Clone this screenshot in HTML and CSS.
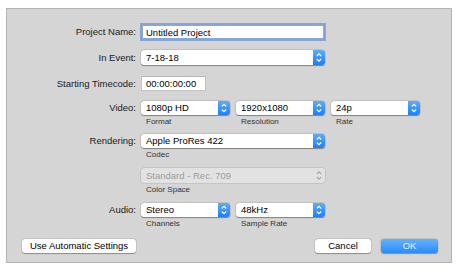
FILE: index.html
```html
<!DOCTYPE html>
<html lang="en">
<head>
    <meta charset="UTF-8">
    <title>New Project</title>
    <link rel="stylesheet" href="styles.css">
</head>
<body>
    <div class="dialog">
        <div class="row r-name">
            <label class="label">Project Name:</label>
            <input class="text-input focused" type="text" value="Untitled Project">
        </div>

        <div class="row r-event">
            <label class="label">In Event:</label>
            <div class="popup w-full">
                <span class="value">7-18-18</span>
                <span class="stepper">
                    <svg width="12" height="15" viewBox="0 0 12 15"><path d="M3.8 6 L6 3.8 L8.2 6 M3.8 9 L6 11.2 L8.2 9" fill="none" stroke="#fff" stroke-width="1.1"/></svg>
                </span>
            </div>
        </div>

        <div class="row r-time">
            <label class="label">Starting Timecode:</label>
            <div class="timecode">00:00:00:00</div>
        </div>

        <div class="row r-video">
            <label class="label">Video:</label>
            <div class="fields">
                <div class="field">
                    <div class="popup w-small">
                        <span class="value">1080p HD</span>
                        <span class="stepper">
                            <svg width="12" height="14" viewBox="0 0 12 14"><path d="M3.8 5.5 L6 3.3 L8.2 5.5 M3.8 8.5 L6 10.7 L8.2 8.5" fill="none" stroke="#fff" stroke-width="1.1"/></svg>
                        </span>
                    </div>
                    <div class="sub">Format</div>
                </div>
                <div class="field">
                    <div class="popup w-small">
                        <span class="value">1920x1080</span>
                        <span class="stepper">
                            <svg width="12" height="14" viewBox="0 0 12 14"><path d="M3.8 5.5 L6 3.3 L8.2 5.5 M3.8 8.5 L6 10.7 L8.2 8.5" fill="none" stroke="#fff" stroke-width="1.1"/></svg>
                        </span>
                    </div>
                    <div class="sub">Resolution</div>
                </div>
                <div class="field">
                    <div class="popup w-small">
                        <span class="value">24p</span>
                        <span class="stepper">
                            <svg width="12" height="14" viewBox="0 0 12 14"><path d="M3.8 5.5 L6 3.3 L8.2 5.5 M3.8 8.5 L6 10.7 L8.2 8.5" fill="none" stroke="#fff" stroke-width="1.1"/></svg>
                        </span>
                    </div>
                    <div class="sub">Rate</div>
                </div>
            </div>
        </div>

        <div class="row r-render">
            <label class="label">Rendering:</label>
            <div class="field">
                <div class="popup w-full">
                    <span class="value">Apple ProRes 422</span>
                    <span class="stepper">
                        <svg width="12" height="14" viewBox="0 0 12 14"><path d="M3.8 5.5 L6 3.3 L8.2 5.5 M3.8 8.5 L6 10.7 L8.2 8.5" fill="none" stroke="#fff" stroke-width="1.1"/></svg>
                    </span>
                </div>
                <div class="sub">Codec</div>
            </div>
        </div>

        <div class="row r-color">
            <label class="label"></label>
            <div class="field">
                <div class="popup w-full disabled">
                    <span class="value">Standard - Rec. 709</span>
                    <span class="stepper">
                        <svg width="12" height="15" viewBox="0 0 12 15"><path d="M3.8 6 L6 3.8 L8.2 6 M3.8 9 L6 11.2 L8.2 9" fill="none" stroke="#a8a8a8" stroke-width="1.1"/></svg>
                    </span>
                </div>
                <div class="sub">Color Space</div>
            </div>
        </div>

        <div class="row r-audio">
            <label class="label">Audio:</label>
            <div class="fields">
                <div class="field">
                    <div class="popup w-small">
                        <span class="value">Stereo</span>
                        <span class="stepper">
                            <svg width="12" height="14" viewBox="0 0 12 14"><path d="M3.8 5.5 L6 3.3 L8.2 5.5 M3.8 8.5 L6 10.7 L8.2 8.5" fill="none" stroke="#fff" stroke-width="1.1"/></svg>
                        </span>
                    </div>
                    <div class="sub">Channels</div>
                </div>
                <div class="field">
                    <div class="popup w-small">
                        <span class="value">48kHz</span>
                        <span class="stepper">
                            <svg width="12" height="14" viewBox="0 0 12 14"><path d="M3.8 5.5 L6 3.3 L8.2 5.5 M3.8 8.5 L6 10.7 L8.2 8.5" fill="none" stroke="#fff" stroke-width="1.1"/></svg>
                        </span>
                    </div>
                    <div class="sub">Sample Rate</div>
                </div>
            </div>
        </div>

        <div class="buttons">
            <button class="btn auto">Use Automatic Settings</button>
            <div class="right">
                <button class="btn cancel">Cancel</button>
                <button class="btn ok">OK</button>
            </div>
        </div>
    </div>
</body>
</html>
```

FILE: styles.css
```css
body {
    margin: 0;
    background-color: #fff;
    font-family: "Liberation Sans", Arial, sans-serif;
    font-size: 9.5px;
    color: #111;
}

.dialog {
    margin: 8px 0 0 6px;
    width: 446px;
    height: 255px;
    box-sizing: border-box;
    background-color: #d5d5d5;
    border: 1px solid #b4b4b4;
    padding-top: 16px;
}

.row {
    display: flex;
    align-items: flex-start;
}

.label {
    width: 129px;
    margin-right: 5px;
    text-align: right;
    line-height: 14px;
    color: #1a1a1a;
}

.r-event { margin-top: 11px; }
.r-time { margin-top: 11px; }
.r-video { margin-top: 10px; }
.r-render { margin-top: 7px; }
.r-color { margin-top: 8px; }
.r-audio { margin-top: 8px; }

.r-event .label,
.r-time .label,
.r-color .label {
    line-height: 15px;
}

.text-input {
    width: 182px;
    height: 14px;
    margin: 0;
    padding: 0 3px;
    box-sizing: border-box;
    border: 1px solid #8aa7d6;
    background-color: #fff;
    font-family: inherit;
    font-size: 9.5px;
    color: #000;
    outline: none;
}

.text-input.focused {
    box-shadow: 0 0 0 2px #85a5d8;
    margin-left: 1px;
}

.timecode {
    width: 65px;
    height: 15px;
    box-sizing: border-box;
    padding-left: 4px;
    line-height: 14px;
    background-color: #fff;
    border: 1px solid #c4c4c4;
    border-top-color: #b8b8b8;
    color: #000;
}

.fields {
    display: flex;
    gap: 6px;
}

.popup {
    display: flex;
    height: 14px;
    background-color: #fff;
    border-radius: 3px;
    box-shadow: 0 0.5px 1px rgba(0, 0, 0, 0.35), 0 0 0 0.5px rgba(0, 0, 0, 0.12);
    overflow: hidden;
}

.r-event .popup,
.r-color .popup {
    height: 15px;
}

.popup .value {
    flex: 1;
    padding-left: 5px;
    line-height: 14px;
    color: #000;
    white-space: nowrap;
}

.r-event .popup .value,
.r-color .popup .value {
    line-height: 15px;
}

.popup .stepper {
    width: 12px;
    background: linear-gradient(#5eabfb, #1d80f6);
    display: flex;
}

.popup.disabled {
    background-color: #e2e2e2;
    box-shadow: 0 0 0 0.5px rgba(0, 0, 0, 0.15);
}

.popup.disabled .value {
    color: #9d9d9d;
}

.popup.disabled .stepper {
    background: none;
}

.w-full { width: 184px; }
.w-small { width: 89px; }

.sub {
    margin-top: 2px;
    padding-left: 5px;
    font-size: 8px;
    line-height: 10px;
    color: #333;
}

.buttons {
    display: flex;
    justify-content: space-between;
    margin: 10px 13px 0 15px;
}

.right {
    display: flex;
    gap: 10px;
}

.btn {
    height: 14px;
    padding: 0;
    border: none;
    border-radius: 3px;
    background-color: #fff;
    box-shadow: 0 0.5px 1px rgba(0, 0, 0, 0.3), 0 0 0 0.5px rgba(0, 0, 0, 0.12);
    font-family: inherit;
    font-size: 9.5px;
    line-height: 14px;
    color: #000;
}

.auto { width: 114px; }
.cancel { width: 56px; }

.ok {
    width: 57px;
    background: linear-gradient(#65b1fc, #2a8cf8);
    color: #e8f2ff;
}
```
